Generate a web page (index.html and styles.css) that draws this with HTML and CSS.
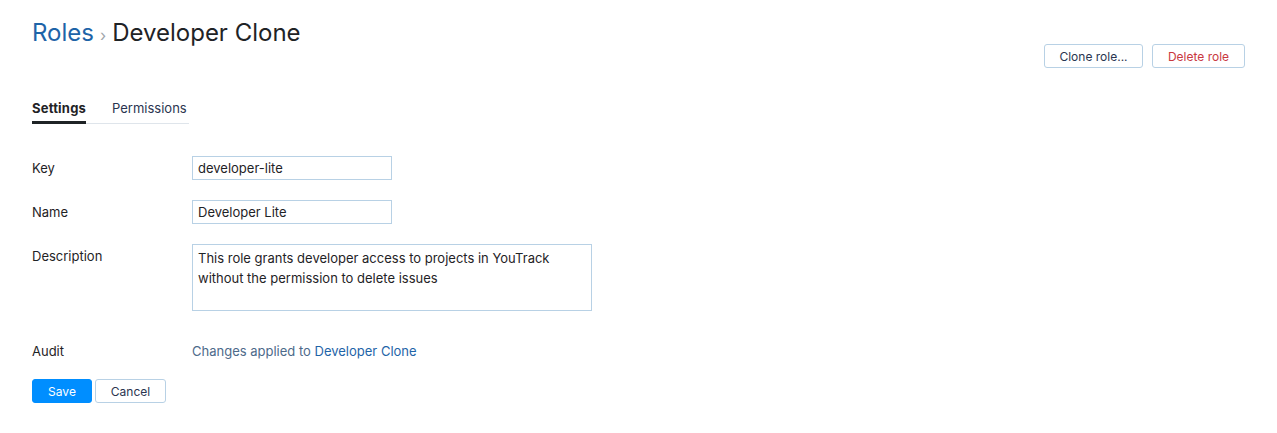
FILE: index.html
```html
<!DOCTYPE html>
<html lang="en">

    <head>
        <meta charset="UTF-8">
        <link rel="stylesheet" href="styles.css">
    </head>

    <body>
        <div class="page">
            <div class="header">
                <h1 class="crumbs">
                    <a class="crumbLink">Roles</a>
                    <span class="sep">›</span>
                    <span>Developer Clone</span>
                </h1>
                <div class="actions">
                    <button class="btn clone">Clone role...</button>
                    <button class="btn danger">Delete role</button>
                </div>
            </div>

            <div class="tabs">
                <span class="tab active">Settings</span>
                <span class="tab">Permissions</span>
            </div>

            <div class="form">
                <div class="row">
                    <label>Key</label>
                    <input class="field" value="developer-lite">
                </div>
                <div class="row">
                    <label>Name</label>
                    <input class="field" value="Developer Lite">
                </div>
                <div class="row">
                    <label>Description</label>
                    <textarea class="field area">This role grants developer access to projects in YouTrack without the permission to delete issues</textarea>
                </div>
                <div class="row audit">
                    <label>Audit</label>
                    <span class="auditText">Changes applied to <a class="link">Developer Clone</a></span>
                </div>
            </div>

            <div class="footer">
                <button class="btn primary">Save</button>
                <button class="btn cancel">Cancel</button>
            </div>
        </div>
    </body>

</html>
```

FILE: styles.css
```css
* {
    box-sizing: border-box;
    font-family: "Inter", "Noto Sans", sans-serif;
}

body {
    margin: 0;
    background: #fff;
    color: #1f2326;
    font-size: 13px;
}

.page {
    padding: 17px 32px 0 32px;
}

.header {
    display: flex;
    justify-content: space-between;
    align-items: flex-start;
}

.crumbs {
    margin: 0;
    font-size: 24px;
    font-weight: 400;
    line-height: 32px;
    display: flex;
    align-items: baseline;
    gap: 6px;
}

.crumbLink {
    color: #1e64a8;
}

.sep {
    color: #a0a5aa;
    font-size: 16px;
}

.actions {
    display: flex;
    gap: 9px;
    margin-top: 27px;
}

.btn {
    height: 24px;
    padding: 0;
    border: 1px solid #b8d1e5;
    border-radius: 3px;
    background: #fff;
    color: #2a3550;
    font-size: 12px;
    white-space: nowrap;
    cursor: pointer;
}

.clone {
    width: 99px;
}

.danger {
    width: 93px;
    color: #c9383f;
}

.primary {
    width: 60px;
    background: #008eff;
    border-color: #008eff;
    color: #fff;
}

.cancel {
    width: 71px;
}

.tabs {
    display: flex;
    gap: 26px;
    margin-top: 26px;
    width: 157px;
    border-bottom: 1px solid #dfe5eb;
}

.tab {
    padding: 6px 0 5px 0;
    margin-bottom: -1px;
    line-height: 16px;
    color: #2a3550;
}

.tab.active {
    font-weight: 700;
    letter-spacing: 0.2px;
    color: #1f2326;
    border-bottom: 3px solid #1f2326;
}

.form {
    margin-top: 32px;
    display: flex;
    flex-direction: column;
    gap: 20px;
}

.row {
    display: grid;
    grid-template-columns: 160px auto;
    align-items: start;
}

.row label {
    line-height: 24px;
}

.field {
    width: 200px;
    height: 24px;
    padding: 0 5px;
    border: 1px solid #b8d1e5;
    border-radius: 0;
    font-size: 13px;
    color: #1f2326;
    outline: none;
}

.area {
    width: 400px;
    height: 67px;
    padding: 3px 5px;
    line-height: 20px;
    resize: none;
}

.audit {
    margin-top: 8px;
}

.auditText {
    line-height: 24px;
    color: #4d6a8a;
}

.link {
    color: #1e64a8;
}

.footer {
    display: flex;
    gap: 3px;
    margin-top: 16px;
}
```
